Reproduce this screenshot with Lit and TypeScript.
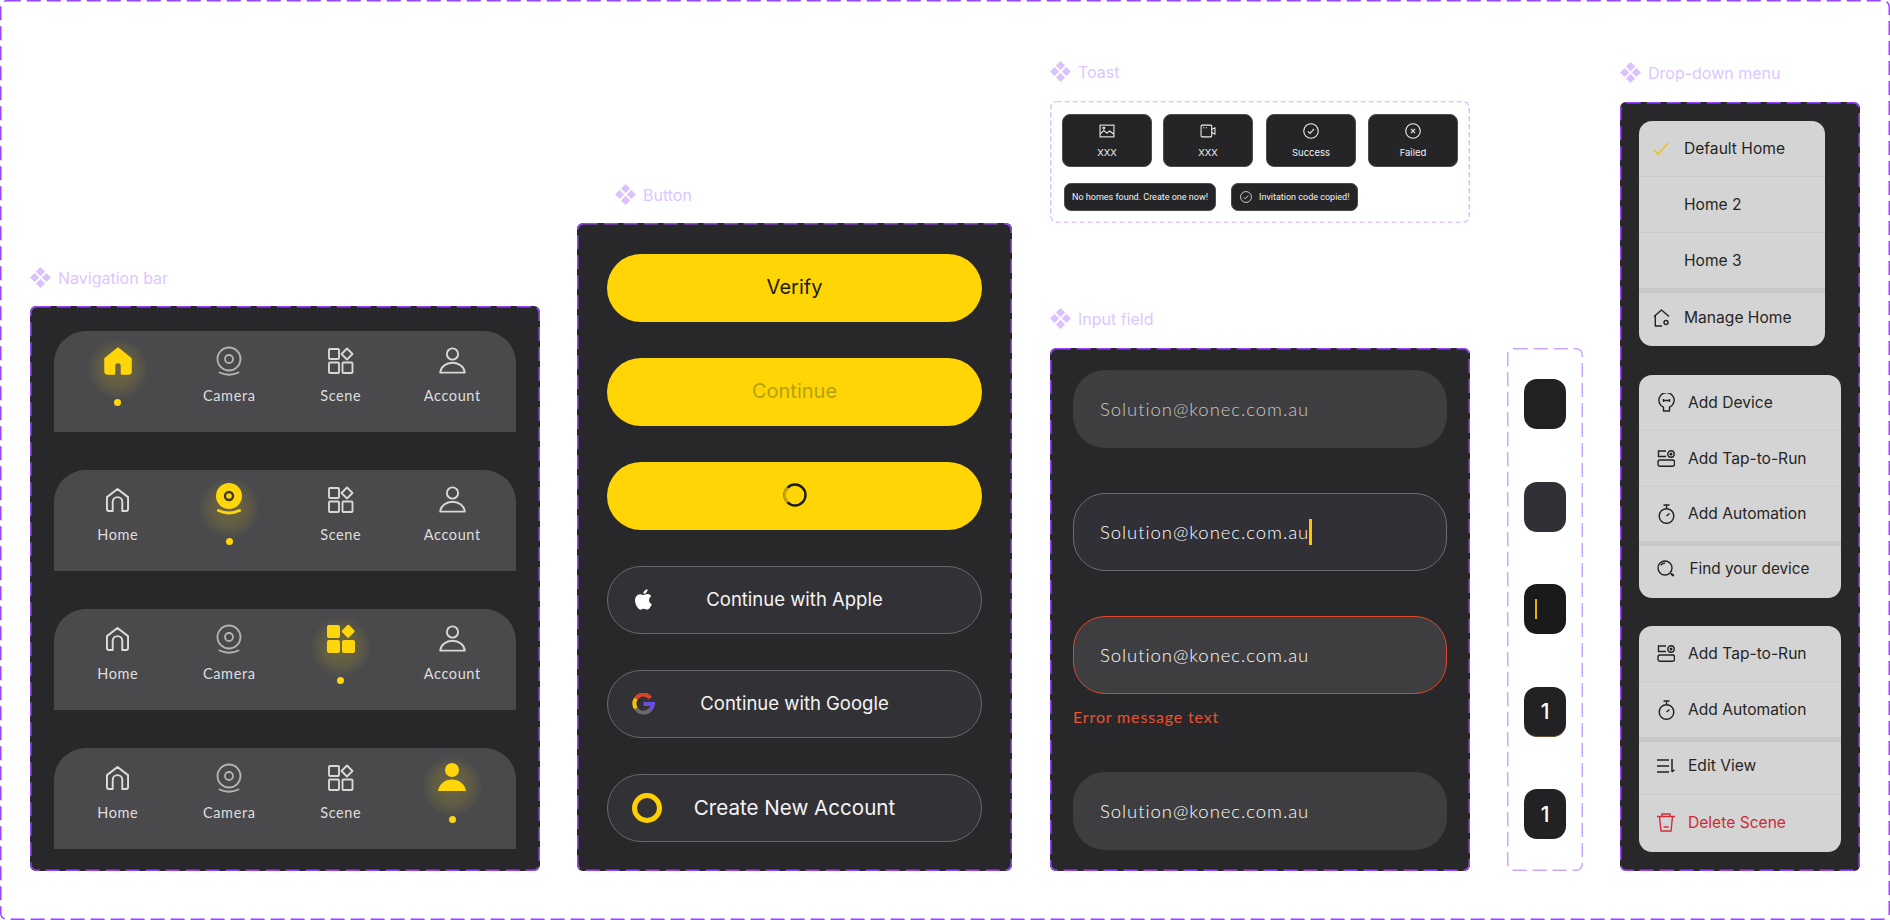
import { LitElement, html, css, svg } from "lit";
import { customElement } from "lit/decorators.js";

const frame = (kind = "") => html`<svg class="dash ${kind}"><rect></rect></svg>`;
const mark = html`<svg class="mark" viewBox="0 0 21 21"><path d="M10.5 0l4.6 4.6-4.6 4.6-4.6-4.6zM4.6 5.9l4.6 4.6-4.6 4.6L0 10.5zM16.4 5.9l4.6 4.6-4.6 4.6-4.6-4.6zM10.5 11.8l4.6 4.6-4.6 4.6-4.6-4.6z"/></svg>`;
const label = (t: string, cls = "") => html`<div class="label ${cls}">${mark}<span>${t}</span></div>`;

const navIcons: Record<string, (a: boolean) => unknown> = {
  Home: (a) => a
    ? html`<svg class="ic" width="28" height="28" viewBox="0 0 28 28"><path fill="#ffd60a" stroke="#ffd60a" stroke-width="1.5" stroke-linejoin="round" d="M1 11.5L14 1l13 10.5V24.5a2.5 2.5 0 0 1-2.5 2.5H17.5V19a3.5 3.5 0 0 0-7 0v8H3.5A2.5 2.5 0 0 1 1 24.5z"/></svg>`
    : html`<svg class="ic" width="23" height="24" viewBox="0 0 24 25"><path fill="none" stroke="#dcdcdc" stroke-width="2" stroke-linejoin="round" d="M1 9.5L12 1l11 8.5V22a2 2 0 0 1-2 2H17V14.5a5 5 0 0 0-10 0V24H3a2 2 0 0 1-2-2z"/></svg>`,
  Camera: (a) => a
    ? html`<svg class="ic" width="26" height="33" viewBox="0 0 26 33"><circle cx="13" cy="13" r="13" fill="#ffd60a"/><circle cx="13" cy="13" r="4" fill="none" stroke="#3c3a30" stroke-width="2.4"/><path d="M2.5 27.5Q13 32.5 23.5 27.5" fill="none" stroke="#ffd60a" stroke-width="3" stroke-linecap="round"/></svg>`
    : html`<svg class="ic" width="26" height="30" viewBox="0 0 26 30"><g fill="none" stroke="#b4b4b4" stroke-width="1.8"><circle cx="13" cy="13" r="11.5"/><circle cx="13" cy="13" r="4"/><path d="M3.5 26.5Q13 31 22.5 26.5" stroke-linecap="round"/></g></svg>`,
  Scene: (a) => a
    ? html`<svg class="ic" width="28" height="29" viewBox="0 0 28 29"><g fill="#ffd60a"><rect x="0" y="1" width="13" height="13" rx="2"/><rect x="0" y="16" width="13" height="13" rx="2"/><rect x="15" y="16" width="13" height="13" rx="2"/><rect x="16.2" y="2.2" width="10" height="10" rx="1.5" transform="rotate(45 21.2 7.2)"/></g></svg>`
    : html`<svg class="ic" width="26" height="27" viewBox="0 0 26 27"><g fill="none" stroke="#d8d8d8" stroke-width="1.9"><rect x="1" y="2" width="10" height="10" rx="1"/><rect x="1" y="15.5" width="10" height="10.5" rx="1"/><rect x="14.5" y="15.5" width="10" height="10.5" rx="1"/><path d="M19 1.5L24.5 7 19 12.5 13.5 7z" stroke-linejoin="round"/></g></svg>`,
  Account: (a) => a
    ? html`<svg class="ic" width="28" height="29" viewBox="0 0 28 29"><g fill="#ffd60a"><circle cx="14" cy="7" r="7"/><path d="M0 28C1 21 7 16.5 14 16.5S27 21 28 28z"/></g></svg>`
    : html`<svg class="ic" width="27" height="27" viewBox="0 0 27 27"><g fill="none" stroke="#d8d8d8" stroke-width="1.9" stroke-linejoin="round"><circle cx="13.5" cy="7" r="5.6"/><path d="M1.2 25.6C1.8 20 7 15.8 13.5 15.8S25.2 20 25.8 25.6z"/></g></svg>`,
};

const ti = { image: svg`<rect x="1" y="2" width="13" height="11" fill="none"/><path d="M1 10.5l3.5-3.5 3 2.5 2.5-2 4 3" fill="none"/><circle cx="4.5" cy="4.8" r=".9"/>`,
  video: svg`<rect x="1" y="2" width="10" height="11" rx="1"/><path d="M11 6l3-1.5v6L11 9"/><path d="M3 4.5h1M5.5 4.5h1"/>`,
  check: svg`<circle cx="7.5" cy="7.5" r="6.8"/><path d="M4.6 7.8l2 2 3.8-4.2"/>`,
  x: svg`<circle cx="7.5" cy="7.5" r="6.8"/><path d="M5.6 5.6l3.8 3.8M9.4 5.6l-3.8 3.8"/>` };
const tIcon = (k: keyof typeof ti) => html`<svg class="ti" viewBox="0 0 15 15">${ti[k]}</svg>`;

const mI = {
  check: html`<svg class="mi" width="16" height="14" viewBox="0 0 16 14"><path d="M1 8l4 4.5L15 1" fill="none" stroke="#f2c200" stroke-width="1.3"/></svg>`,
  manage: html`<svg class="mi" width="17" height="18" viewBox="0 0 17 18"><g fill="none" stroke="#222" stroke-width="1.4" stroke-linejoin="round"><path d="M1 7.5L8.5 1 16 7.5M2.3 6.5V17H9"/><circle cx="13" cy="13.5" r="2"/></g></svg>`,
  bulb: html`<svg class="mi" width="17" height="19" viewBox="0 0 17 19"><g fill="none" stroke="#222" stroke-width="1.4"><path d="M5.5 14.2a7.6 7.6 0 1 1 6 0V18h-6z" stroke-linejoin="round"/><path d="M5.5 6v3M11.5 6v3M5.5 7.5h6"/></g></svg>`,
  tap: html`<svg class="mi" width="18" height="17" viewBox="0 0 18 17"><g fill="none" stroke="#222" stroke-width="1.4"><path d="M9 1H1.5v5.5H9"/><rect x="1" y="10" width="16.5" height="6.3" rx="2"/><circle cx="14" cy="4" r="3.2"/><circle cx="14" cy="4" r=".8" fill="#222"/></g></svg>`,
  timer: html`<svg class="mi" width="17" height="20" viewBox="0 0 17 20"><g fill="none" stroke="#222" stroke-width="1.4"><circle cx="8.5" cy="12" r="7.3"/><path d="M5.5 1h6M8.5 1v3.5M8.5 12l3-2.5"/></g></svg>`,
  find: html`<svg class="mi" width="18" height="17" viewBox="0 0 18 17"><g fill="none" stroke="#222" stroke-width="1.4"><circle cx="8" cy="8" r="7"/><path d="M3.8 5.4A5 5 0 0 1 8 3"/></g><path d="M13.8 13.5l3 2.3" stroke="#222" stroke-width="2.2"/></svg>`,
  edit: html`<svg class="mi" width="18" height="14" viewBox="0 0 18 14"><path d="M0 1h12M0 7h12M0 13h12M15 0v13M15 13l2.5-2.2" fill="none" stroke="#222" stroke-width="1.5"/></svg>`,
  trash: html`<svg class="mi" width="18" height="19" viewBox="0 0 18 19"><g fill="none" stroke="#ce2f3a" stroke-width="1.4"><path d="M0 3.5h18M5 3.5V1h8v2.5M2.5 3.5L4 18h10l1.5-14.5M6.5 14h5"/></g></svg>`,
};

@customElement("app-root")
export class AppRoot extends LitElement {
  static styles = css`
    :host { display: block; width: 1890px; height: 920px; background: #fff; }
    * { box-sizing: border-box; }
    .canvas { position: relative; width: 1890px; height: 920px; display: flex; align-items: flex-end; gap: 37px; padding: 0 0 49px 30px; font-family: Inter, sans-serif; overflow: hidden; }
    .dash { position: absolute; inset: 0; width: 100%; height: 100%; pointer-events: none; }
    .dash rect { x: 0.75px; y: 0.75px; width: calc(100% - 1.5px); height: calc(100% - 1.5px); rx: 6px; fill: none; stroke: #9747ff; stroke-width: 1.5; stroke-dasharray: 14 6; }
    .dash.light rect { stroke: #c9a6ff; }
    .dash.fine rect { stroke: #d2b4ff; stroke-width: 1.2; stroke-dasharray: 5 3; }
    .section { display: flex; flex-direction: column; }
    .label { display: flex; align-items: center; gap: 7px; height: 21px; margin-bottom: 18px; color: #dcc6ff; font-size: 16px; }
    .label.far { margin-bottom: 19px; }
    .label.in { padding-left: 38px; }
    .mark { width: 21px; height: 21px; fill: #dcc1ff; flex: none; }
    .panel { position: relative; background: #28282a; border-radius: 6px; }

    .nav { width: 510px; padding: 24.5px 24px 22.5px; display: flex; flex-direction: column; gap: 38px; }
    .bar { height: 101px; background: #4a4a4d; border-radius: 32px 32px 0 0; padding: 0 8px; display: grid; grid-template-columns: repeat(4, 1fr); }
    .item { position: relative; display: flex; flex-direction: column; align-items: center; padding-top: 15px; }
    .slot { height: 30px; display: flex; align-items: center; justify-content: center; position: relative; }
    .ic { display: block; flex: none; position: relative; }
    .item span { margin-top: 10px; height: 20px; line-height: 20px; font-family: Lato, sans-serif; font-size: 14.5px; color: #dedede; letter-spacing: 0.6px; }
    .item.on::before { content: ""; position: absolute; left: 50%; top: 7px; width: 62px; height: 62px; transform: translateX(-50%); background: radial-gradient(circle, rgba(255,214,10,.2) 0%, rgba(255,214,10,.12) 42%, rgba(255,214,10,0) 70%); }
    .dot { position: relative; margin-top: 23px; width: 7px; height: 7px; border-radius: 50%; background: #ffd60a; }

    .buttons { width: 435px; padding: 30.5px 30px 29.5px; display: flex; flex-direction: column; gap: 36px; }
    .btn { position: relative; height: 68px; padding-bottom: 1px; border-radius: 34px; display: flex; align-items: center; justify-content: center; font-size: 20px; }
    .btn.y { background: #ffd505; color: #1b1b1b; }
    .btn.dim { color: #b5a012; }
    .btn.o { background: #323136; border: 1.5px solid #69686c; color: #f4f4f4; font-size: 18.5px; }
    .btn.big { font-size: 20.6px; }
    .btn .lead { position: absolute; left: 24px; top: 50%; transform: translateY(-50%); display: block; }
    .ring { width: 30px; height: 30px; border: 5px solid #ffd000; border-radius: 50%; }

    .mid { width: 533px; margin-left: 1px; display: flex; flex-direction: column; gap: 85px; }
    .toast { position: relative; width: 420px; height: 122px; padding: 13px 12px 0; display: flex; flex-direction: column; gap: 16px; border-radius: 6px; }
    .cards { display: flex; }
    .card { width: 90px; height: 53px; background: #252527; border-radius: 8px; border: 1px solid #4c4c4e; color: #f2f2f2; font-size: 9.5px; display: flex; flex-direction: column; align-items: center; padding-top: 8px; gap: 8px; }
    .card:nth-child(2) { margin-left: 11px; }
    .card:nth-child(3) { margin-left: 13px; }
    .card:nth-child(4) { margin-left: 12px; }
    .ti { width: 16px; height: 16px; fill: none; stroke: #f0f0f0; stroke-width: 1; flex: none; }
    .pills { display: flex; padding-left: 2px; gap: 15px; }
    .pill { height: 28px; background: #252527; border: 1px solid #4c4c4e; border-radius: 7px; color: #f2f2f2; font-family: Roboto, sans-serif; font-size: 9px; display: flex; align-items: center; padding: 0 7px; gap: 7px; white-space: nowrap; }
    .pill.tight { font-size: 9px; padding: 0 8px; }
    .pill .ti { width: 12px; height: 12px; }
    .row { display: flex; gap: 37px; align-items: flex-end; }
    .inputs { width: 420px; height: 523px; padding: 22px 23px; display: flex; flex-direction: column; }
    .field { height: 78px; border-radius: 32px; background: #3e3e40; display: flex; align-items: center; padding-left: 27px; font-family: Lato, sans-serif; font-size: 18.5px; font-weight: 300; letter-spacing: 0.95px; color: #fff; flex: none; }
    .field.ph { color: #c8c8c8; }
    .field.focus { background: #313036; border: 1.5px solid #6d6c70; margin-top: 45px; padding-left: 26px; }
    .field.err { border: 1.5px solid #e0452a; margin-top: 45px; padding-left: 26px; }
    .caret { display: inline-block; width: 2.5px; height: 26px; background: #ffc400; flex: none; }
    .error { margin-top: 13px; height: 20px; line-height: 20px; color: #ea5230; font-family: Lato, sans-serif; font-size: 16px; font-weight: 400; letter-spacing: 0.85px; }
    .field.last { margin-top: 45px; }
    .side { position: relative; width: 76px; height: 523px; padding: 31px 0 0 17px; display: flex; flex-direction: column; gap: 52.5px; }
    .tile { width: 42px; height: 50px; border-radius: 13px; background: #222224; display: flex; align-items: center; justify-content: center; color: #fff; font-size: 21px; font-weight: 500; flex: none; position: relative; }
    .tile.b { background: #313036; }
    .tile.c { background: #1a1a1a; justify-content: flex-start; padding-left: 11px; }
    .tile.c i { width: 2px; height: 20px; background: #e2b400; display: block; }
    .tile.d { border-bottom: 1px solid #6b4a2a; }

    .drop { width: 240px; height: 769px; padding: 19px 19px; display: flex; flex-direction: column; gap: 28px; }
    .menu { width: 202px; background: #d4d4d4; border-radius: 13px; overflow: hidden; flex: none; }
    .menu.first { width: 186px; --pl: 14px; }
    .menu.second { margin-top: 1px; }
    .mrow { height: 56px; display: flex; align-items: center; padding-left: var(--pl, 17px); border-bottom: 1px solid #cbcbcb; font-size: 15.6px; color: #262626; }
    .mrow.thick { border-bottom: 5px solid #c8c8c8; height: 60px; }
    .mrow.thick.short { height: 58.5px; }
    .mrow.plain { border-bottom: 1px solid #cbcbcb; height: 53px; padding-bottom: 5px; }
    .mrow.tail { border-bottom: 0; height: 53px; padding-bottom: 4px; }
    .mrow.tail.find { height: 52.5px; padding-bottom: 6px; }
    .mrow.tail.red { height: 57px; padding-bottom: 3px; }
    .mrow .box { width: 20px; margin-right: 12px; display: flex; justify-content: center; flex: none; }
    .menu.first .box { width: 18px; margin-right: 13px; justify-content: flex-start; }
    .mi { display: block; }
    .mrow.find span { margin-left: 1.5px; font-size: 15.3px; }
    .mrow.red { color: #cc2b36; }
  `;

  private nav(active: string) {
    return html`<div class="bar">${Object.keys(navIcons).map((k) => {
      const on = k === active;
      return html`<div class="item ${on ? "on" : ""}"><div class="slot">${navIcons[k](on)}</div>${on ? html`<div class="dot"></div>` : html`<span>${k}</span>`}</div>`;
    })}</div>`;
  }

  private mrow(icon: unknown, text: string, cls = "") {
    return html`<div class="mrow ${cls}"><div class="box">${icon}</div><span>${text}</span></div>`;
  }

  render() {
    return html`<div class="canvas">
      ${frame()}
      <div class="section">
        ${label("Navigation bar")}
        <div class="panel nav">${frame()}${["Home", "Camera", "Scene", "Account"].map((a) => this.nav(a))}</div>
      </div>
      <div class="section">
        ${label("Button", "in")}
        <div class="panel buttons">
          ${frame()}
          <div class="btn y">Verify</div>
          <div class="btn y dim">Continue</div>
          <div class="btn y"><svg width="24" height="24" viewBox="0 0 24 24" fill="none" stroke-width="2.4"><circle cx="12" cy="12" r="10.5" stroke="#1d1d1d"/><path d="M4.6 19.4A10.5 10.5 0 0 1 4.6 4.6" stroke="#c9a80a"/></svg></div>
          <div class="btn o"><svg class="lead" width="24" height="24" viewBox="0 0 24 24" fill="#fff"><path d="M17.05 12.04c-.03-2.6 2.12-3.85 2.22-3.91-1.21-1.77-3.09-2.01-3.76-2.04-1.6-.16-3.12.94-3.93.94-.81 0-2.06-.92-3.39-.89-1.74.03-3.35 1.01-4.25 2.57-1.81 3.14-.46 7.79 1.3 10.34.86 1.25 1.89 2.65 3.24 2.6 1.3-.05 1.79-.84 3.36-.84 1.57 0 2.01.84 3.39.81 1.4-.03 2.28-1.27 3.14-2.53.99-1.45 1.4-2.86 1.42-2.93-.03-.01-2.72-1.04-2.74-4.12zM14.46 4.4c.72-.87 1.2-2.07 1.07-3.27-1.03.04-2.28.69-3.02 1.55-.66.77-1.24 2-1.09 3.18 1.15.09 2.32-.59 3.04-1.46z"/></svg>Continue with Apple</div>
          <div class="btn o"><svg class="lead" width="23" height="22" viewBox="0 0 23 22" fill="none" stroke-width="4"><path d="M4 5.5A9 9 0 0 1 18.5 5" stroke="#e0412c"/><path d="M4 5.5A9 9 0 0 0 4 15.5" stroke="#f5c400"/><path d="M4 15.5A9 9 0 0 0 18 17" stroke="#6a6a68"/><path d="M18 17A9 9 0 0 0 21 11H11.5" stroke="#6b4de0"/></svg>Continue with Google</div>
          <div class="btn o big"><div class="lead ring"></div>Create New Account</div>
        </div>
      </div>
      <div class="mid">
        <div class="section">
          ${label("Toast", "far")}
          <div class="toast">
            ${frame("fine")}
            <div class="cards">
              <div class="card">${tIcon("image")}<span>XXX</span></div>
              <div class="card">${tIcon("video")}<span>XXX</span></div>
              <div class="card">${tIcon("check")}<span>Success</span></div>
              <div class="card">${tIcon("x")}<span>Failed</span></div>
            </div>
            <div class="pills">
              <div class="pill">No homes found. Create one now!</div>
              <div class="pill tight">${tIcon("check")}<span>Invitation code copied!</span></div>
            </div>
          </div>
        </div>
        <div class="row">
          <div class="section">
            ${label("Input field", "far")}
            <div class="panel inputs">
              ${frame()}
              <div class="field ph">Solution@konec.com.au</div>
              <div class="field focus"><span>Solution@konec.com.au</span><i class="caret"></i></div>
              <div class="field err">Solution@konec.com.au</div>
              <div class="error">Error message text</div>
              <div class="field last">Solution@konec.com.au</div>
            </div>
          </div>
          <div class="side">
            ${frame("light")}
            <div class="tile"></div>
            <div class="tile b"></div>
            <div class="tile c"><i></i></div>
            <div class="tile d">1</div>
            <div class="tile">1</div>
          </div>
        </div>
      </div>
      <div class="section">
        ${label("Drop-down menu", "far")}
        <div class="panel drop">
          ${frame()}
          <div class="menu first">
            ${this.mrow(mI.check, "Default Home")}
            ${this.mrow("", "Home 2")}
            ${this.mrow("", "Home 3", "thick")}
            ${this.mrow(mI.manage, "Manage Home", "tail")}
          </div>
          <div class="menu second">
            ${this.mrow(mI.bulb, "Add Device")}
            ${this.mrow(mI.tap, "Add Tap-to-Run")}
            ${this.mrow(mI.timer, "Add Automation", "thick short")}
            ${this.mrow(mI.find, "Find your device", "tail find")}
          </div>
          <div class="menu">
            ${this.mrow(mI.tap, "Add Tap-to-Run")}
            ${this.mrow(mI.timer, "Add Automation", "thick")}
            ${this.mrow(mI.edit, "Edit View", "plain")}
            ${this.mrow(mI.trash, "Delete Scene", "tail red")}
          </div>
        </div>
      </div>
    </div>`;
  }
}
